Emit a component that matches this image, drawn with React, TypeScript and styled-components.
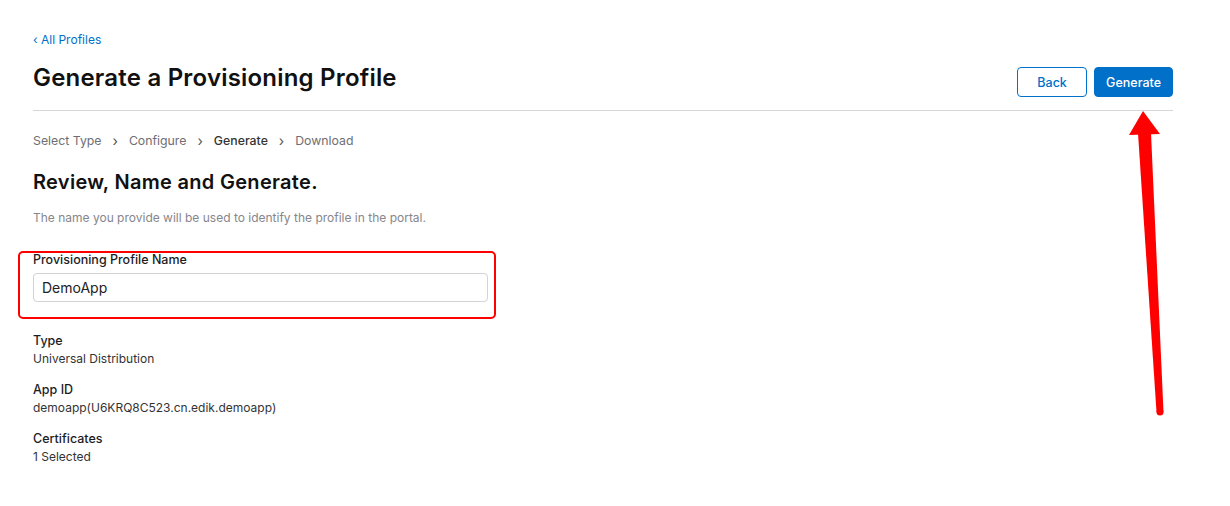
import styled, { createGlobalStyle } from "styled-components";

const GlobalStyle = createGlobalStyle`
  body {
    margin: 0;
    background: #fff;
    font-family: Inter, "Liberation Sans", sans-serif;
    color: #1d1d1f;
  }
`;

function App() {
  return (
    <Page>
      <GlobalStyle />
      <BackLink>‹ All Profiles</BackLink>
      <Header>
        <Title>Generate a Provisioning Profile</Title>
        <Actions>
          <Button>Back</Button>
          <Button primary>Generate</Button>
        </Actions>
      </Header>
      <Steps>
        <Step>Select Type</Step>
        <Chevron>›</Chevron>
        <Step>Configure</Step>
        <Chevron>›</Chevron>
        <Step active>Generate</Step>
        <Chevron>›</Chevron>
        <Step>Download</Step>
      </Steps>
      <SectionTitle>Review, Name and Generate.</SectionTitle>
      <Hint>The name you provide will be used to identify the profile in the portal.</Hint>
      <Highlight>
        <FieldLabel>Provisioning Profile Name</FieldLabel>
        <Input defaultValue="DemoApp" />
      </Highlight>
      <Detail>
        <Label>Type</Label>
        <Value>Universal Distribution</Value>
      </Detail>
      <Detail>
        <Label>App ID</Label>
        <Value>demoapp(U6KRQ8C523.cn.edik.demoapp)</Value>
      </Detail>
      <Detail>
        <Label>Certificates</Label>
        <Value>1 Selected</Value>
      </Detail>
      <Arrow width="42" height="310" viewBox="0 0 42 310">
        <polygon points="15,1 32,24 1,25" fill="#ff0000" />
        <polygon points="10,23 23,23 35.5,302 28.5,302" fill="#ff0000" />
        <circle cx="32" cy="302" r="3.5" fill="#ff0000" />
      </Arrow>
    </Page>
  );
}

export default App;

const Page = styled.div`
  position: relative;
  width: 1230px;
  height: 506px;
  box-sizing: border-box;
  padding: 31px 57px 0 33px;
`;

const BackLink = styled.a`
  display: block;
  color: #0070c9;
  font-size: 12px;
  line-height: 18px;
  cursor: pointer;
`;

const Header = styled.div`
  display: flex;
  align-items: flex-start;
  justify-content: space-between;
  border-bottom: 1px solid #d6d6d6;
  padding: 14px 0 13px;
`;

const Title = styled.h1`
  margin: 0;
  font-size: 24px;
  line-height: 30px;
  font-weight: 600;
  letter-spacing: 0.2px;
  color: #111;
`;

const Actions = styled.div`
  display: flex;
  gap: 7px;
  margin-top: 4px;
`;

const Button = styled.button<{ primary?: boolean }>`
  height: 30px;
  padding: 0 ${(p) => (p.primary ? "11px" : "19px")};
  min-width: ${(p) => (p.primary ? "78px" : "70px")};
  border-radius: 4px;
  font-family: Inter, "Liberation Sans", sans-serif;
  font-size: 12.5px;
  font-weight: 500;
  border: 1px solid #0070c9;
  background: ${(p) => (p.primary ? "#0070c9" : "#fff")};
  color: ${(p) => (p.primary ? "#fff" : "#0070c9")};
`;

const Steps = styled.div`
  display: flex;
  align-items: center;
  gap: 11px;
  margin-top: 21px;
  font-size: 12.3px;
  line-height: 18px;
`;

const Step = styled.span<{ active?: boolean }>`
  color: ${(p) => (p.active ? "#333" : "#6e6e73")};
  font-weight: ${(p) => (p.active ? 500 : 400)};
`;

const Chevron = styled.span`
  color: #555;
  font-size: 14px;
`;

const SectionTitle = styled.h2`
  margin: 20px 0 0;
  font-size: 20px;
  font-weight: 600;
  letter-spacing: 0.3px;
  line-height: 24px;
  color: #111;
`;

const Hint = styled.p`
  margin: 15px 0 0;
  font-size: 12px;
  line-height: 18px;
  color: #86868b;
`;

const Highlight = styled.div`
  margin: 24px 0 0 -15px;
  width: 478px;
  box-sizing: border-box;
  padding: 0 8px 15px 13px;
  border: 2px solid #ff0000;
  border-radius: 5px;
`;

const Label = styled.div`
  font-size: 12.5px;
  font-weight: 500;
  line-height: 18px;
  color: #1d1d1f;
`;

const FieldLabel = styled(Label)`
  line-height: 14px;
`;

const Input = styled.input`
  display: block;
  margin-top: 6px;
  width: 455px;
  height: 29px;
  box-sizing: border-box;
  padding: 0 8px;
  border: 1px solid #d2d2d7;
  border-radius: 4px;
  font-family: Inter, "Liberation Sans", sans-serif;
  font-size: 14px;
  color: #222;
  outline: none;
`;

const Detail = styled.div`
  margin-top: 13px;
`;

const Value = styled.div`
  font-size: 12px;
  line-height: 18px;
  color: #333;
`;

const Arrow = styled.svg`
  position: absolute;
  left: 1128px;
  top: 110px;
`;
